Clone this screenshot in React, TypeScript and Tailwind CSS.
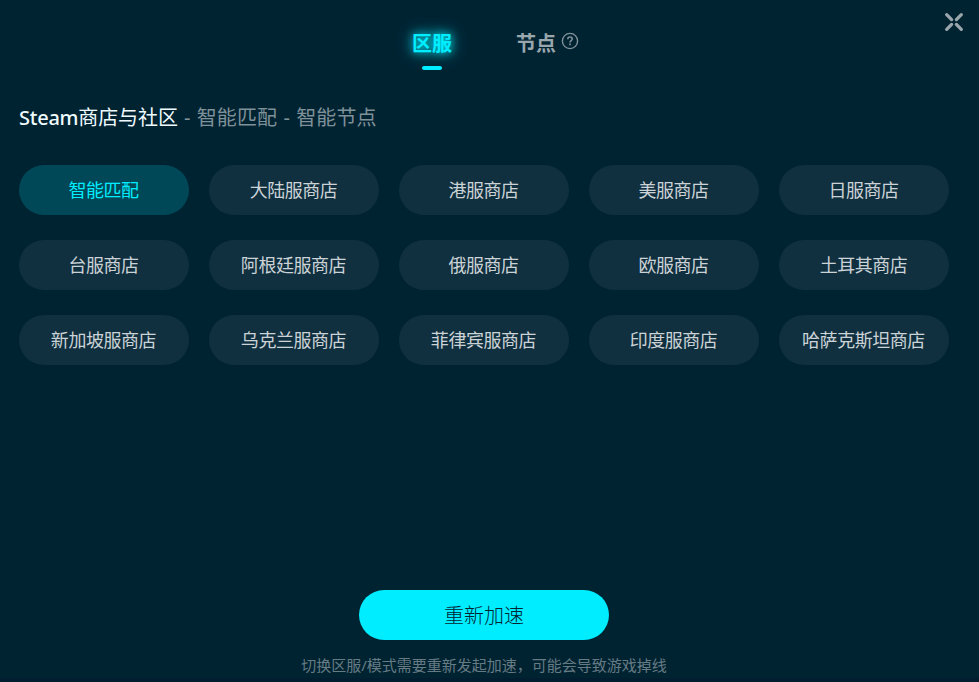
import { useState } from "react";
import clsx from "clsx";

const REGIONS = [
  "智能匹配", "大陆服商店", "港服商店", "美服商店", "日服商店",
  "台服商店", "阿根廷服商店", "俄服商店", "欧服商店", "土耳其商店",
  "新加坡服商店", "乌克兰服商店", "菲律宾服商店", "印度服商店", "哈萨克斯坦商店",
];

function CloseIcon() {
  return (
    <svg width="20" height="20" viewBox="0 0 20 20" fill="none" stroke="#99a7ad" strokeWidth="3.3" strokeLinecap="round">
      <path d="M2.7 2.7 7.6 7.6M17.3 2.7 12.4 7.6M2.7 17.3 7.6 12.4M17.3 17.3 12.4 12.4" />
    </svg>
  );
}

function HelpIcon() {
  return (
    <svg width="18" height="18" viewBox="0 0 18 18" fill="none" stroke="#80919a" strokeWidth="1.4">
      <circle cx="9" cy="9" r="7.6" />
      <path d="M6.8 7.2c0-1.4.9-2.2 2.2-2.2s2.2.8 2.2 2c0 1.5-2.2 1.6-2.2 3.4" strokeWidth="1.6" />
      <path d="M9 11.6v1.6" strokeWidth="1.7" />
    </svg>
  );
}

export default function App() {
  const [region, setRegion] = useState("智能匹配");

  return (
    <div lang="zh-CN" className="flex h-[682px] w-[979px] flex-col overflow-hidden border-b-4 border-[#001e30] bg-[#002332] font-['Noto_Sans','Noto_Sans_CJK_SC',sans-serif]">
      <header className="grid h-[96px] shrink-0 grid-cols-[412px_1fr_35px]">
        <div />
        <nav className="flex items-start pt-[29px] text-xl leading-[30px] font-bold">
          <button className="flex w-10 flex-col items-center text-[#00edff] [text-shadow:0_0_10px_#00edff,0_0_18px_#00edff99]">
            区服
            <span className="mt-[7px] h-1 w-5 rounded-full bg-[#00edff]" />
          </button>
          <button className="ml-[64px] flex text-[#99a7ad]">
            节点
            <span className="mt-[3px] ml-[5px]"><HelpIcon /></span>
          </button>
        </nav>
        <button className="self-start pt-3"><CloseIcon /></button>
      </header>

      <main className="flex flex-1 flex-col pr-[30px] pl-[19px]">
        <h1 className="mt-[7px] flex h-[30px] items-center text-xl leading-[30px] whitespace-pre text-[#7f9199]">
          <span className="font-medium tracking-[-0.25px] text-[#f0fbff]">Steam<span className="font-normal tracking-[-0.1px]">商店与社区</span></span>
          <span className="[word-spacing:0.8px] tracking-[0.15px]"> - 智能匹配 - 智能节点</span>
        </h1>
        <div className="mt-8 grid grid-cols-5 gap-x-5 gap-y-[25px]">
          {REGIONS.map((name) => (
            <button
              key={name}
              onClick={() => setRegion(name)}
              className={clsx(
                "h-[50px] rounded-full pr-px pb-px text-lg tracking-[-0.45px]",
                name === region ? "bg-[#004857] text-[#00edff]" : "bg-[#103040] text-[#ccd3d6]",
              )}
            >
              {name}
            </button>
          ))}
        </div>
      </main>

      <footer className="flex h-[88px] shrink-0 flex-col items-center pr-[11px]">
        <button className="h-[50px] w-[250px] shrink-0 rounded-full bg-[#00edff] pt-px text-xl font-light text-[#002332]">
          重新加速
        </button>
        <p className="mt-[14px] text-[15px] leading-[22px] text-[#667b84]">
          切换区服/模式需要重新发起加速，可能会导致游戏掉线
        </p>
      </footer>
    </div>
  );
}
